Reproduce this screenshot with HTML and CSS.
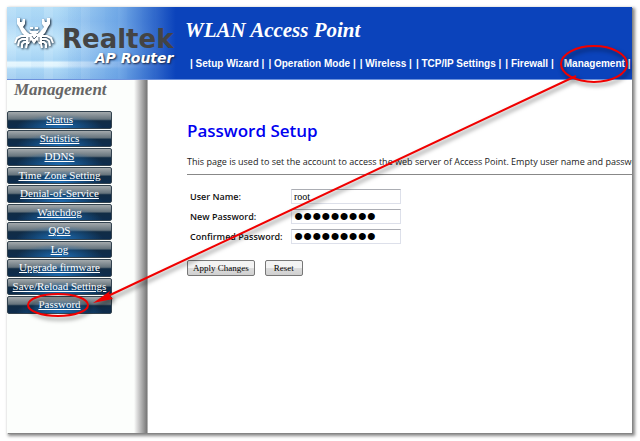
FILE: index.html
```html
<!DOCTYPE html>
<html lang="en">
<head>
    <meta charset="UTF-8">
    <meta name="viewport" content="width=device-width, initial-scale=1.0">
    <title>WLAN Access Point</title>
    <link rel="stylesheet" href="styles.css">
</head>
<body>

<div class="page">
    <header class="header">
        <div class="brand">
            <svg class="crab" viewBox="0 0 40 34" aria-hidden="true">
                <g fill="#fff">
                    <path d="M3 1h3v4h2l1-3h2v5l-2 3 4 5 4 3-4 3-5-5-3-6-2-3z"/>
                    <path d="M36 1h-3v4h-2l-1-3h-2v5l2 3-4 5-4 3 4 3 5-5 3-6 2-3z"/>
                    <path d="M16 10h3v2h-3zM21 10h3v2h-3z"/>
                    <path d="M15 13l2 1h6l2-1-1 3-2 1h-4l-2-1z"/>
                    <path d="M12 17l16 0 0 10-3 0-2-4-3 4-3-4-2 4-3 0z"/>
                </g>
                <g fill="none" stroke="#fff" stroke-width="2">
                    <path d="M14 19H7L3 21 1 26M13 22H8L5 24 4 29M13 25H10L8 27V31M13 27L12 31"/>
                    <path d="M26 19H33L37 21 39 26M27 22H32L35 24 36 29M27 25H30L32 27V31M27 27L28 31"/>
                </g>
                <path d="M15 20v5M18 19l2 3 3-3M25 20v5" fill="none" stroke="#567" stroke-width="1"/>
            </svg>
            <div class="brand-text">
                <span class="brand-name">Realtek</span>
                <span class="brand-sub">AP Router</span>
            </div>
        </div>
        <div class="header-main">
            <h1>WLAN Access Point</h1>
            <nav class="top-nav">
                <span>| <a href="#">Setup Wizard</a> |</span>
                <span>| <a href="#">Operation Mode</a> |</span>
                <span>| <a href="#">Wireless</a> |</span>
                <span>| <a href="#">TCP/IP Settings</a> |</span>
                <span>| <a href="#">Firewall</a> |</span>
                <span class="current"><a href="#">Management</a> |</span>
            </nav>
        </div>
    </header>

    <div class="columns">
        <aside class="sidebar">
            <h2>Management</h2>
            <nav class="menu">
                <a href="#">Status</a>
                <a href="#">Statistics</a>
                <a href="#">DDNS</a>
                <a href="#">Time Zone Setting</a>
                <a href="#">Denial-of-Service</a>
                <a href="#">Watchdog</a>
                <a href="#">QOS</a>
                <a href="#">Log</a>
                <a href="#">Upgrade firmware</a>
                <a href="#">Save/Reload Settings</a>
                <a href="#">Password</a>
            </nav>
        </aside>

        <main class="content">
            <h2>Password Setup</h2>
            <p>This page is used to set the account to access the web server of Access Point. Empty user name and password</p>
            <hr>
            <form>
                <div class="fields">
                    <label for="username">User Name:</label>
                    <input type="text" id="username" value="root">
                    <label for="newpass">New Password:</label>
                    <input type="password" id="newpass" value="123456789">
                    <label for="confpass">Confirmed Password:</label>
                    <input type="password" id="confpass" value="123456789">
                </div>
                <div class="buttons">
                    <button type="submit">Apply Changes</button>
                    <button type="reset">Reset</button>
                </div>
            </form>
        </main>
    </div>
</div>

<!-- Red markers: Management -> Password -->
<svg class="marker" width="640" height="441" viewBox="0 0 640 441" aria-hidden="true">
    <g fill="none" stroke="#f00000" stroke-width="2">
        <ellipse cx="594" cy="64" rx="33" ry="18"/>
        <ellipse cx="58" cy="305" rx="30" ry="11"/>
        <path d="M576 76L108 296"/>
    </g>
    <path d="M93 303L110 291L109 295L113 299Z" fill="#f00000"/>
</svg>

</body>
</html>
```
FILE: styles.css
```css
* {
    box-sizing: border-box;
}

body {
    margin: 0;
    min-height: 100vh;
    padding: 7px 8px 8px 7px;
    display: flex;
    background-color: white;
    font-family: "Open Sans", "Noto Sans", sans-serif;
}

.page {
    flex: 1;
    min-width: 0;
    display: flex;
    flex-direction: column;
    background-color: white;
    box-shadow: 1px 1px 0 #858585, 2px 2px 3px 1px #888;
}

.header {
    display: flex;
    height: 73px;
    background:
        linear-gradient(90deg, transparent 8%, rgba(70, 135, 220, 0.6) 18%, #0b43bb 27%),
        repeating-linear-gradient(90deg, rgba(255, 255, 255, 0.1) 0 9px, transparent 9px 24px, rgba(120, 180, 235, 0.08) 24px 37px),
        linear-gradient(#b4def7, #a9d5f5 20%, #c4e7fb 50%, #a8d5f5 74%, #e4f6fe 77%, #e0f4fe 82%, #acd8f6 86%, #9fcbf0);
    border-bottom: 1px solid #6d92dc;
    color: white;
}

.brand {
    width: 178px;
    padding: 10px 0 0 7px;
    display: flex;
    gap: 8px;
}

.crab {
    width: 40px;
    height: 34px;
    filter: drop-shadow(1px 1px 1px #123);
}

.brand-text {
    display: flex;
    flex-direction: column;
    gap: 2px;
    padding-top: 12px;
    font-family: "DejaVu Sans", sans-serif;
    font-weight: bold;
}

.brand-name {
    font-size: 26px;
    line-height: 20px;
    color: #444;
}

.brand-sub {
    align-self: flex-end;
    font-size: 14px;
    line-height: 15px;
    font-style: italic;
    text-shadow: 1px 1px 2px #124;
}

.header-main {
    flex: 1;
    min-width: 0;
    overflow: hidden;
}

h1 {
    margin: 11px 0 0;
    font: italic bold 21px/24px "Liberation Serif", serif;
}

.top-nav {
    display: flex;
    gap: 4px;
    margin: 16px 0 0 5px;
    font: bold 10px/12px "Liberation Sans", sans-serif;
    white-space: nowrap;
}

.top-nav a {
    color: white;
    text-decoration: none;
}

.top-nav .current {
    padding-left: 6px;
}

.columns {
    flex: 1;
    display: flex;
}

.sidebar {
    width: 141px;
    background: linear-gradient(90deg, #fcfefc 127px, #ddd 130px, #777 140px, #eee);
}

.sidebar h2 {
    margin: 0 0 11px 7px;
    font: italic bold 17px/20px "Liberation Serif", serif;
    color: #666;
}

.menu {
    display: grid;
    grid-auto-rows: 1fr;
    gap: 1px;
    width: 105px;
    height: 203px;
}

.menu a {
    border: 1px solid #33434f;
    border-radius: 2px;
    background:
        radial-gradient(ellipse at 50% 100%, rgba(30, 115, 190, 0.9), transparent 60%),
        linear-gradient(#a3a9ac, #66747d 45%, #112c45 55%, #0d2c4d);
    color: white;
    font: 11px/15px "Liberation Serif", serif;
    text-align: center;
}

.content {
    flex: 1;
    min-width: 0;
    padding: 40px 0 0 39px;
    overflow: hidden;
}

.content h2 {
    margin: 0;
    font-size: 17px;
    line-height: 22px;
    font-weight: 600;
    color: #0000f0;
}

.content p {
    margin: 12px 0 5px;
    font-size: 9px;
    line-height: 15px;
    white-space: nowrap;
    color: #222;
}

hr {
    margin: 0;
    border: 0;
    border-top: 1px solid #888;
}

.fields {
    display: grid;
    grid-template-columns: 101px 110px;
    gap: 5px 0;
    margin: 14px 0 0 3px;
}

.fields label {
    font-size: 9px;
    line-height: 15px;
    font-weight: 600;
    color: #111;
}

.fields input {
    width: 100%;
    height: 15px;
    padding: 0 2px;
    border: 1px solid #dde0ea;
    border-top-color: #abadb3;
    background-color: white;
    font: 10px "Liberation Serif", serif;
}

.fields input[type="password"] {
    font: 26px "Liberation Sans", sans-serif;
}

.buttons {
    display: flex;
    gap: 10px;
    margin-top: 16px;
}

.buttons button {
    min-width: 38px;
    height: 16px;
    padding: 0 5px;
    border: 1px solid #777;
    border-radius: 2px;
    background: linear-gradient(#f3f3f3 50%, #dcdcdc 50%, #d0d0d0);
    font: 9px/12px "Liberation Serif", serif;
    color: black;
}

.marker {
    position: absolute;
    top: 0;
    left: 0;
    pointer-events: none;
    filter: drop-shadow(2px 3px 2px rgba(0, 0, 0, 0.5));
}
```
